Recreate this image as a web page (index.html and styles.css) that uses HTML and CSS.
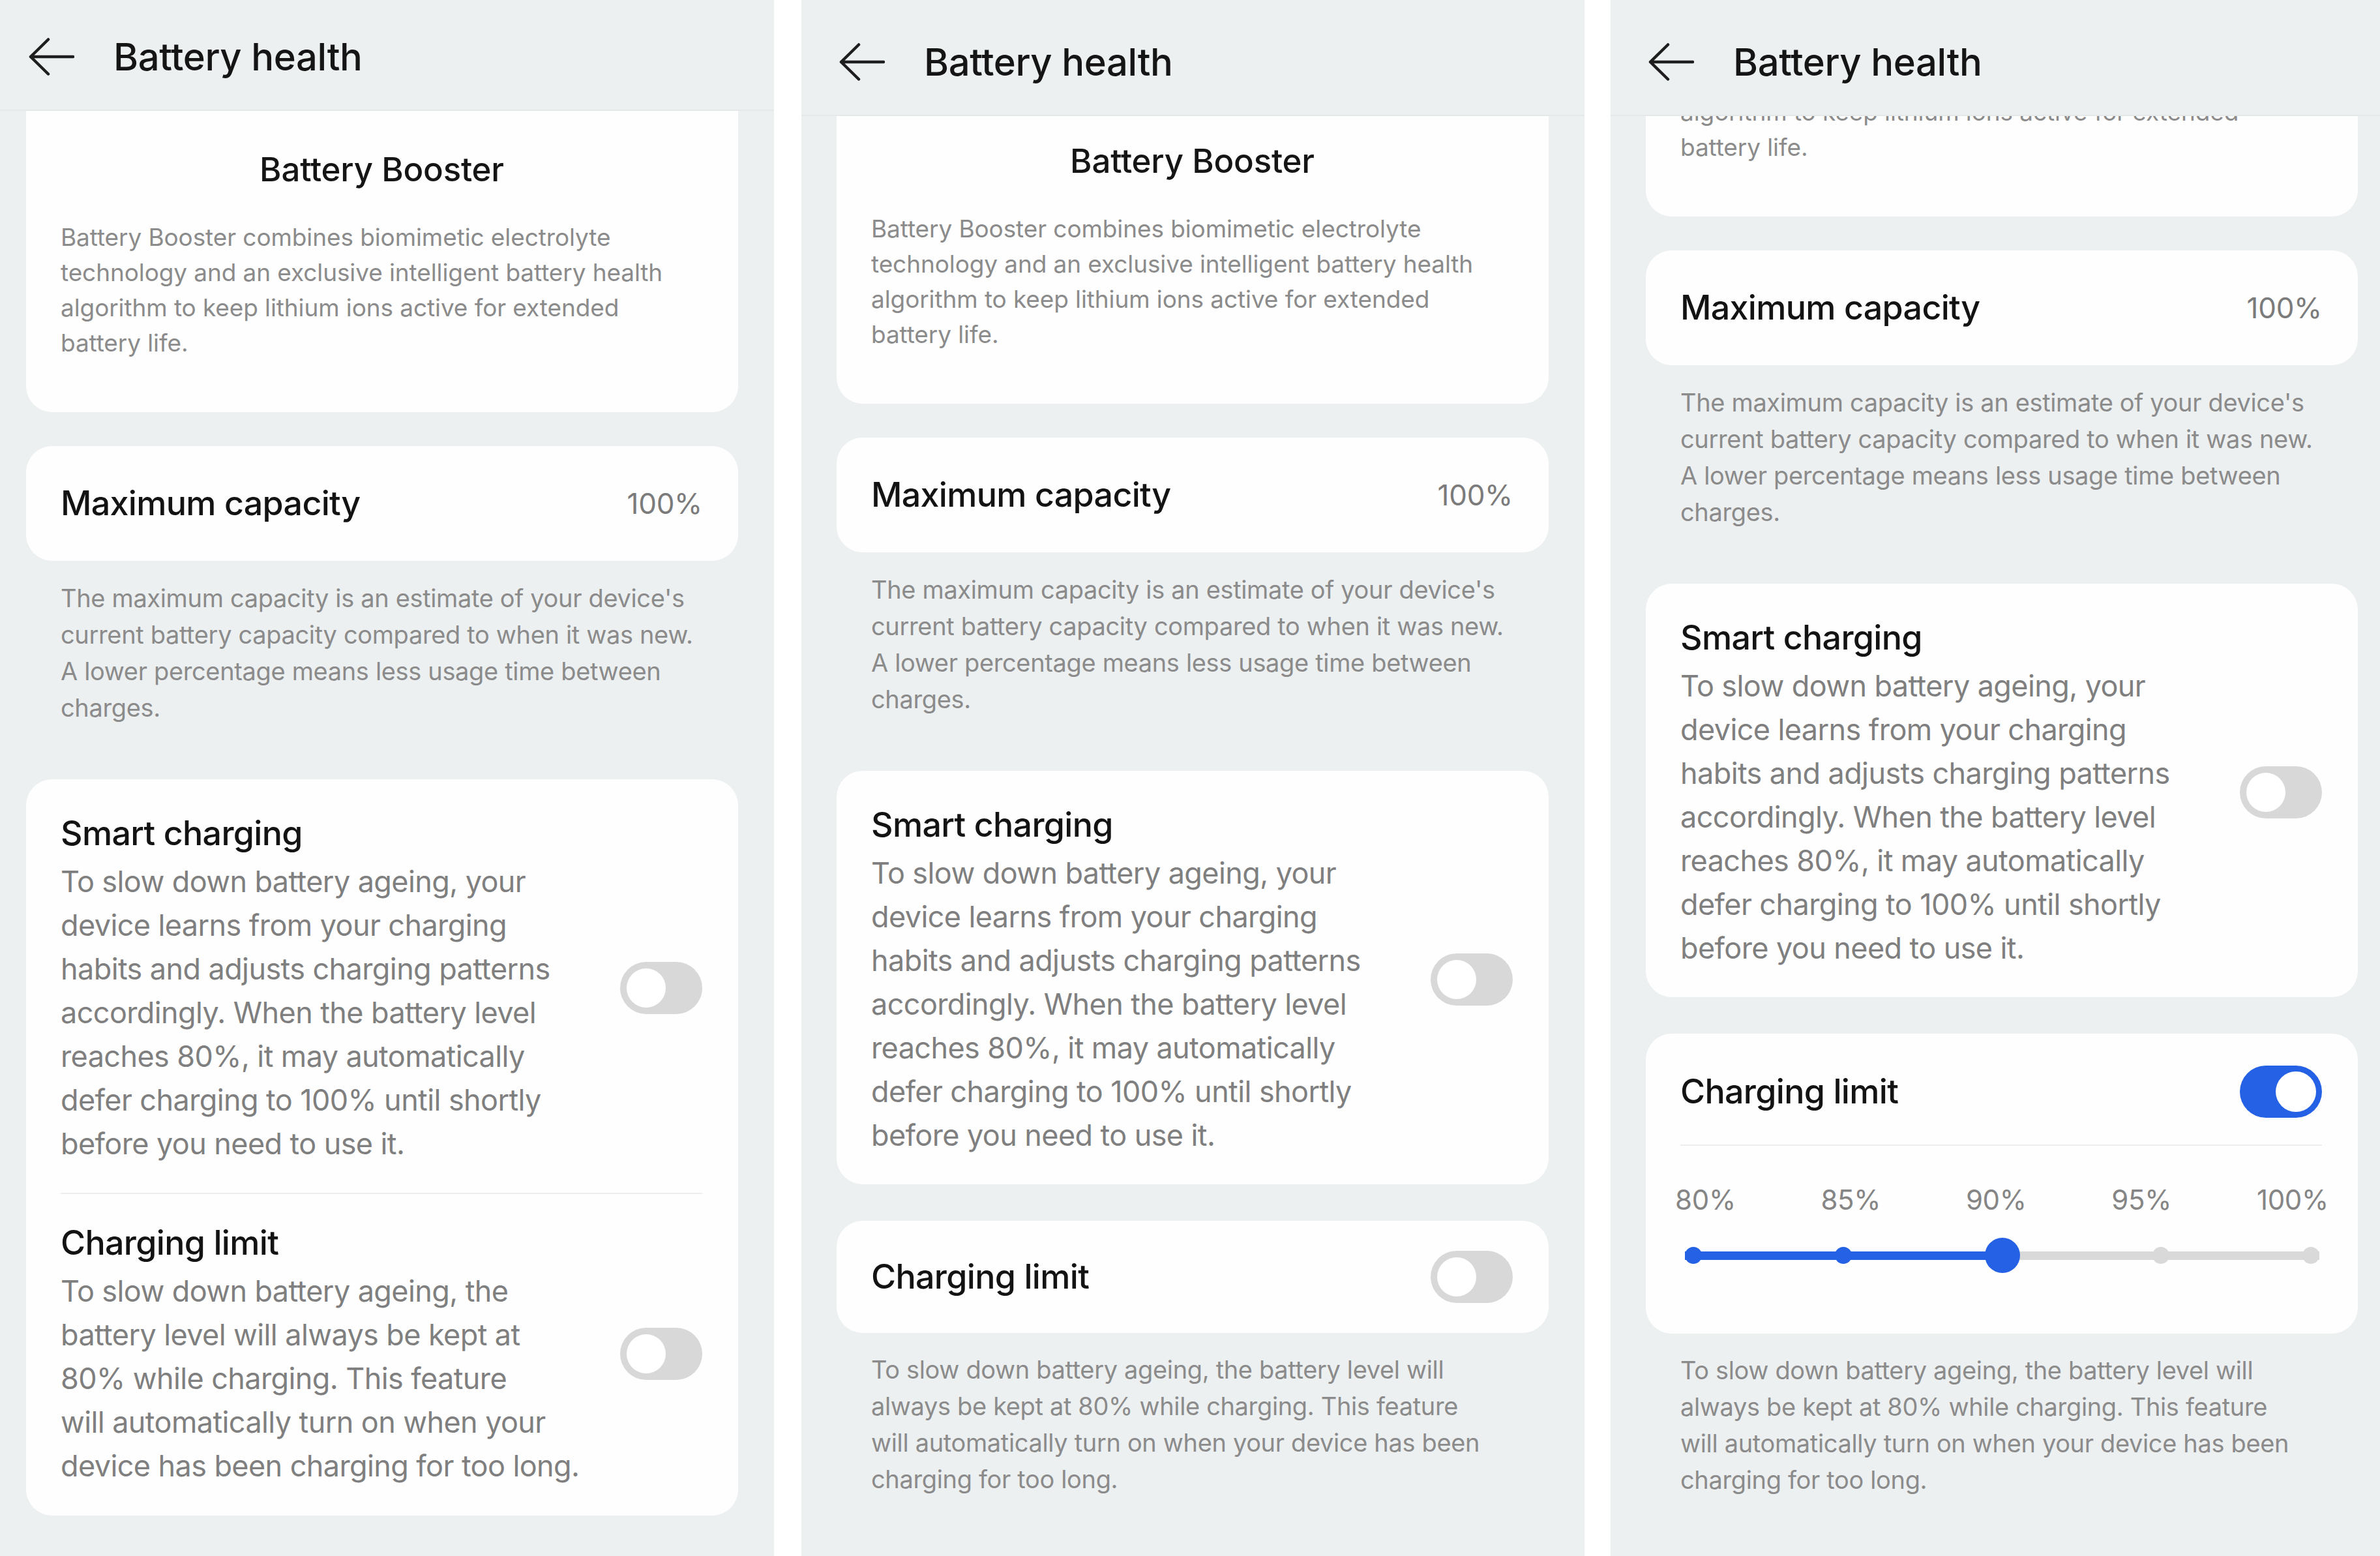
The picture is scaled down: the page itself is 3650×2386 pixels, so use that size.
FILE: index.html
```html
<!DOCTYPE html>
<html lang="en">
<head>
<meta charset="utf-8">
<title>Battery health</title>
<link rel="stylesheet" href="styles.css">
</head>
<body>
<div class="strip">

  <!-- Screen 1 -->
  <section class="shot shot--a">
    <div class="phone">
      <header class="appbar">
        <svg class="back" viewBox="0 0 70 58" aria-hidden="true"><path d="M3 29 H68 M3 29 L30 2.5 M3 29 L30 55.5"/></svg>
        <h1 class="appbar__title">Battery health</h1>
      </header>
      <div class="viewport">
        <div class="scroll scroll--a">
          <div class="card card--intro">
            <h2 class="intro__title">Battery Booster</h2>
            <p class="intro__text">Battery Booster combines biomimetic electrolyte<br>technology and an exclusive intelligent battery health<br>algorithm to keep lithium ions active for extended<br>battery life.</p>
          </div>
          <div class="card card--value">
            <span class="row__title">Maximum capacity</span>
            <span class="value">100%</span>
          </div>
          <p class="note note--cap">The maximum capacity is an estimate of your device's<br>current battery capacity compared to when it was new.<br>A lower percentage means less usage time between<br>charges.</p>
          <div class="card card--rows">
            <div class="row">
              <div class="row__body">
                <h3 class="row__title">Smart charging</h3>
                <p class="row__text">To slow down battery ageing, your<br>device learns from your charging<br>habits and adjusts charging patterns<br>accordingly. When the battery level<br>reaches 80%, it may automatically<br>defer charging to 100% until shortly<br>before you need to use it.</p>
              </div>
              <span class="switch"><span class="switch__knob"></span></span>
            </div>
            <div class="row row--divided">
              <div class="row__body">
                <h3 class="row__title">Charging limit</h3>
                <p class="row__text">To slow down battery ageing, the<br>battery level will always be kept at<br>80% while charging. This feature<br>will automatically turn on when your<br>device has been charging for too long.</p>
              </div>
              <span class="switch"><span class="switch__knob"></span></span>
            </div>
          </div>
        </div>
      </div>
    </div>
  </section>

  <!-- Screen 2 -->
  <section class="shot shot--b">
    <div class="phone">
      <header class="appbar">
        <svg class="back" viewBox="0 0 70 58" aria-hidden="true"><path d="M3 29 H68 M3 29 L30 2.5 M3 29 L30 55.5"/></svg>
        <h1 class="appbar__title">Battery health</h1>
      </header>
      <div class="viewport">
        <div class="scroll scroll--b">
          <div class="card card--intro">
            <h2 class="intro__title">Battery Booster</h2>
            <p class="intro__text">Battery Booster combines biomimetic electrolyte<br>technology and an exclusive intelligent battery health<br>algorithm to keep lithium ions active for extended<br>battery life.</p>
          </div>
          <div class="card card--value">
            <span class="row__title">Maximum capacity</span>
            <span class="value">100%</span>
          </div>
          <p class="note note--cap">The maximum capacity is an estimate of your device's<br>current battery capacity compared to when it was new.<br>A lower percentage means less usage time between<br>charges.</p>
          <div class="card card--rows">
            <div class="row">
              <div class="row__body">
                <h3 class="row__title">Smart charging</h3>
                <p class="row__text">To slow down battery ageing, your<br>device learns from your charging<br>habits and adjusts charging patterns<br>accordingly. When the battery level<br>reaches 80%, it may automatically<br>defer charging to 100% until shortly<br>before you need to use it.</p>
              </div>
              <span class="switch"><span class="switch__knob"></span></span>
            </div>
          </div>
          <div class="card card--toggle">
            <span class="row__title">Charging limit</span>
            <span class="switch"><span class="switch__knob"></span></span>
          </div>
          <p class="note note--limit">To slow down battery ageing, the battery level will<br>always be kept at 80% while charging. This feature<br>will automatically turn on when your device has been<br>charging for too long.</p>
        </div>
      </div>
    </div>
  </section>

  <!-- Screen 3 -->
  <section class="shot shot--c">
    <div class="phone">
      <header class="appbar">
        <svg class="back" viewBox="0 0 70 58" aria-hidden="true"><path d="M3 29 H68 M3 29 L30 2.5 M3 29 L30 55.5"/></svg>
        <h1 class="appbar__title">Battery health</h1>
      </header>
      <div class="viewport">
        <div class="scroll scroll--c">
          <div class="card card--intro">
            <h2 class="intro__title">Battery Booster</h2>
            <p class="intro__text">Battery Booster combines biomimetic electrolyte<br>technology and an exclusive intelligent battery health<br>algorithm to keep lithium ions active for extended<br>battery life.</p>
          </div>
          <div class="card card--value">
            <span class="row__title">Maximum capacity</span>
            <span class="value">100%</span>
          </div>
          <p class="note note--cap">The maximum capacity is an estimate of your device's<br>current battery capacity compared to when it was new.<br>A lower percentage means less usage time between<br>charges.</p>
          <div class="card card--rows">
            <div class="row">
              <div class="row__body">
                <h3 class="row__title">Smart charging</h3>
                <p class="row__text">To slow down battery ageing, your<br>device learns from your charging<br>habits and adjusts charging patterns<br>accordingly. When the battery level<br>reaches 80%, it may automatically<br>defer charging to 100% until shortly<br>before you need to use it.</p>
              </div>
              <span class="switch"><span class="switch__knob"></span></span>
            </div>
          </div>
          <div class="card card--limit">
            <div class="limit__head">
              <span class="row__title">Charging limit</span>
              <span class="switch switch--on"><span class="switch__knob"></span></span>
            </div>
            <div class="limit__labels">
              <span>80%</span><span>85%</span><span>90%</span><span>95%</span><span>100%</span>
            </div>
            <div class="slider">
              <span class="slider__dot slider__dot--on"></span>
              <span class="slider__dot slider__dot--on"></span>
              <span class="slider__thumb"></span>
              <span class="slider__dot"></span>
              <span class="slider__dot"></span>
            </div>
          </div>
          <p class="note note--limit">To slow down battery ageing, the battery level will<br>always be kept at 80% while charging. This feature<br>will automatically turn on when your device has been<br>charging for too long.</p>
        </div>
      </div>
    </div>
  </section>

</div>
</body>
</html>
```

FILE: styles.css
```css
* { box-sizing: border-box; }

html, body {
  margin: 0;
  padding: 0;
  background: #ffffff;
}

body {
  font-family: "Inter", "Noto Sans", "Liberation Sans", sans-serif;
  color: #1c1c1c;
  width: 3650px;
  height: 2386px;
  overflow: hidden;
}

h1, h2, h3, p { margin: 0; font-weight: inherit; }

.strip {
  display: flex;
  height: 2386px;
}

.shot {
  height: 2386px;
  overflow: hidden;
  background: #edf0f1;
  flex: none;
}
.shot--a { width: 1187px; margin-right: 42px; }
.shot--b { width: 1201px; margin-right: 40px; }
.shot--c { width: 1180px; }

.phone {
  width: 1201px;
  height: 2400px;
  display: flex;
  flex-direction: column;
  background: #edf0f1;
}
.shot--a .phone { margin-left: -14px; margin-top: -8px; }

/* App bar */
.appbar {
  flex: none;
  height: 178px;
  padding: 14px 0 0 58px;
  display: flex;
  align-items: center;
  border-bottom: 2px solid #e5e8e9;
  background: #edf0f1;
}
.back {
  width: 70px;
  height: 58px;
  flex: none;
  fill: none;
  stroke: #1e1e1e;
  stroke-width: 4.5;
  stroke-linecap: round;
  stroke-linejoin: round;
}
.appbar__title {
  margin-left: 60px;
  font-size: 58px;
  font-weight: 500;
  letter-spacing: -0.4px;
  color: #151515;
  line-height: 1;
}

/* Scroll area */
.viewport {
  flex: 1;
  overflow: hidden;
  padding: 0 55px 0 54px;
}
.scroll { display: flex; flex-direction: column; }
.scroll--a { margin-top: -9px; }
.scroll--b { margin-top: -30px; }
.scroll--c { margin-top: -317px; }

.card {
  background: #fefefe;
  border-radius: 40px;
}

/* Intro card */
.card--intro {
  border-top-left-radius: 0;
  border-top-right-radius: 0;
  padding: 64px 54px 79px 53px;
}
.intro__title {
  text-align: center;
  font-size: 51px;
  line-height: 70px;
  font-weight: 500;
  letter-spacing: -0.2px;
  color: #151515;
}
.intro__text {
  margin-top: 42px;
  font-size: 37px;
  line-height: 54px;
  letter-spacing: -0.1px;
  color: #8b8b8b;
  white-space: nowrap;
}

/* Value card */
.card--value {
  margin-top: 52px;
  height: 176px;
  padding: 0 55px 0 53px;
  display: flex;
  align-items: center;
  justify-content: space-between;
}
.row__title {
  font-size: 52px;
  line-height: 70px;
  font-weight: 500;
  letter-spacing: -0.7px;
  color: #131313;
}
.value {
  font-size: 44px;
  color: #7b7b7b;
  letter-spacing: -0.3px;
}

/* Notes below cards */
.note {
  padding: 0 53px;
  font-size: 38px;
  line-height: 56px;
  letter-spacing: -0.35px;
  color: #8b8b8b;
  white-space: nowrap;
}
.note--cap { margin-top: 29px; margin-bottom: 82px; }
.note--limit { margin-top: 28px; }

/* Rows card */
.card--rows { padding: 0 55px 0 53px; }
.row {
  display: flex;
  align-items: center;
  justify-content: space-between;
  padding: 48px 0 42px;
}
.row--divided {
  border-top: 2px solid #ededed;
  padding: 40px 0 43px;
}
.row__text {
  margin-top: 5px;
  font-size: 45px;
  line-height: 67px;
  letter-spacing: -0.6px;
  color: #7f7f7f;
  white-space: nowrap;
}

/* Toggle switches */
.switch {
  flex: none;
  width: 126px;
  height: 80px;
  border-radius: 40px;
  background: #d8d8d8;
  padding: 10px;
  display: flex;
  justify-content: flex-start;
}
.switch__knob {
  width: 60px;
  height: 60px;
  border-radius: 50%;
  background: #ffffff;
}
.switch--on {
  background: #2461e4;
  justify-content: flex-end;
  padding: 9px;
}
.switch--on .switch__knob { width: 62px; height: 62px; }

/* Charging limit card (screen 2) */
.card--toggle {
  margin-top: 56px;
  height: 172px;
  padding: 0 55px 0 53px;
  display: flex;
  align-items: center;
  justify-content: space-between;
}

/* Charging limit card with slider (screen 3) */
.card--limit {
  margin-top: 56px;
  padding: 49px 55px 93px 53px;
}
.limit__head {
  display: flex;
  align-items: center;
  justify-content: space-between;
  padding-bottom: 41px;
  border-bottom: 2px solid #ededed;
}
.limit__labels {
  margin: 55px -10px 0 -8px;
  display: flex;
  justify-content: space-between;
  font-size: 42px;
  line-height: 56px;
  letter-spacing: -0.3px;
  color: #858585;
}
.slider {
  margin: 30px 4px 0 7px;
  height: 54px;
  display: flex;
  align-items: center;
  justify-content: space-between;
  background: linear-gradient(to right, #2461e4 0 50%, #d9d9d9 50% 100%) no-repeat center / 100% 13px;
}
.slider__dot {
  width: 26px;
  height: 26px;
  border-radius: 50%;
  background: #d9d9d9;
}
.slider__dot--on { background: #2461e4; }
.slider__thumb {
  width: 54px;
  height: 54px;
  border-radius: 50%;
  background: #2461e4;
}
```
